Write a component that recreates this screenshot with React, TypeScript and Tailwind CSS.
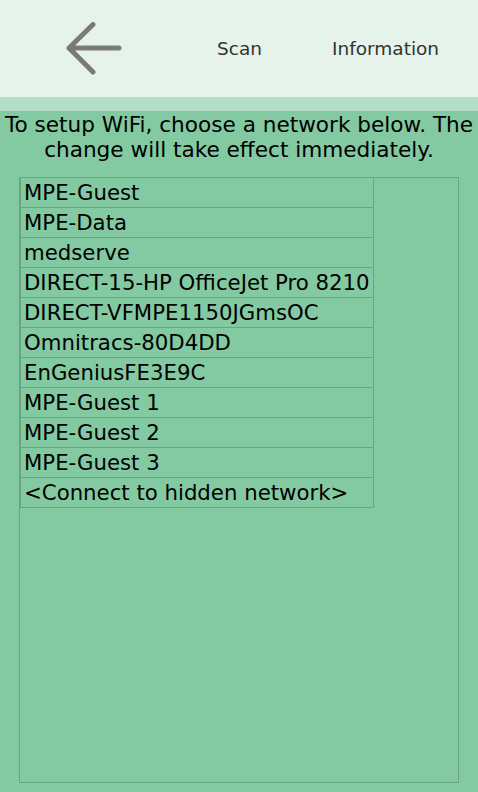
import React from 'react';

const networks = [
  'MPE-Guest',
  'MPE-Data',
  'medserve',
  'DIRECT-15-HP OfficeJet Pro 8210',
  'DIRECT-VFMPE1150JGmsOC',
  'Omnitracs-80D4DD',
  'EnGeniusFE3E9C',
  'MPE-Guest 1',
  'MPE-Guest 2',
  'MPE-Guest 3',
  '<Connect to hidden network>',
];

const BackArrow: React.FC = () => (
  <svg width="56" height="56" viewBox="0 0 56 56" fill="none">
    <path
      d="M53 26H3M3 26L27 2.5M3 26L27 50"
      stroke="#7a7a7a"
      strokeWidth="5"
      strokeLinecap="round"
      strokeLinejoin="round"
    />
  </svg>
);

export default function App() {
  return (
    <div className="w-[478px] h-[792px] flex flex-col bg-[#83c9a1] font-['DejaVu_Sans',sans-serif] overflow-hidden">
      <header className="h-[97px] shrink-0 bg-[#e6f3ea] flex items-center">
        <button className="ml-[66px] mt-[2px]">
          <BackArrow />
        </button>
        <span className="ml-[95px] text-[18.5px] text-[#333]">Scan</span>
        <span className="ml-[70px] text-[18.5px] text-[#333]">Information</span>
      </header>
      <div className="h-[14px] shrink-0 bg-[#b3dfc6]" />
      <p className="text-center text-[21.6px] leading-[25px] text-black mt-[1px]">
        To setup WiFi, choose a network below. The change will take effect immediately.
      </p>
      <div className="mx-[19px] mt-[15px] mb-[9px] flex-1 border border-[#6aa583]">
        <ul className="w-[354px]">
          {networks.map((n) => (
            <li
              key={n}
              className="h-[30px] border-b border-r border-l border-[#6aa583] pl-[3px] pt-[1px] flex items-center text-[21.25px] text-black whitespace-nowrap"
            >
              {n}
            </li>
          ))}
        </ul>
      </div>
    </div>
  );
}
